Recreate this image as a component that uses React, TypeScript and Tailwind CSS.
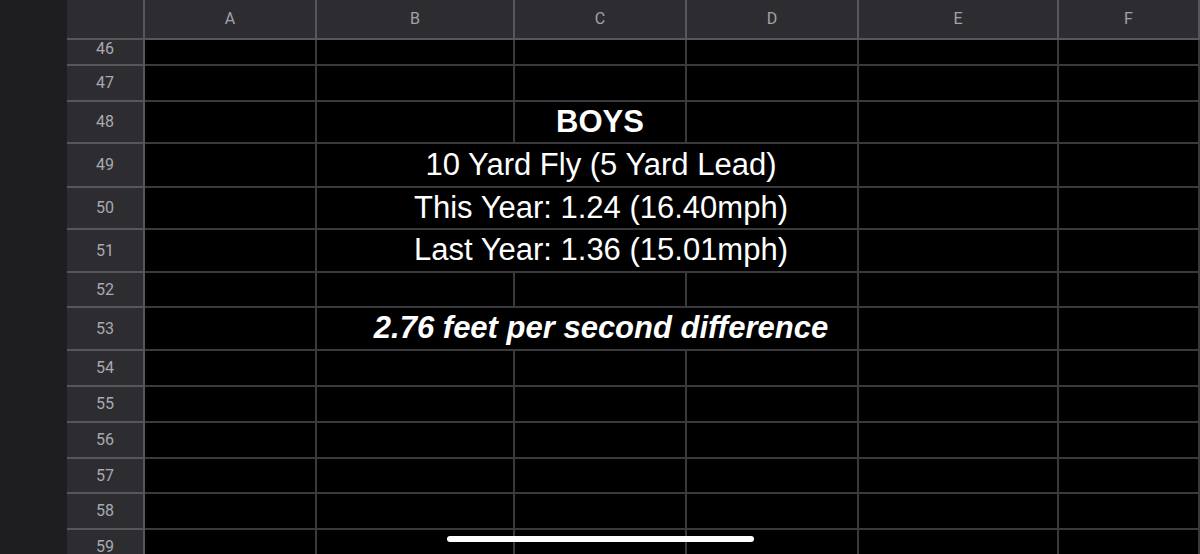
import React from "react";

type Row = {
  n: number;
  h: string;
  text?: string;
  style?: "bold" | "plain" | "boldItalic";
  spill?: boolean;
};

const COLS = ["A", "B", "C", "D", "E", "F"];
const COL_W = ["w-[172px]", "w-[198px]", "w-[172px]", "w-[172px]", "w-[200px]", "flex-1"];

const ROWS: Row[] = [
  { n: 46, h: "h-[26px]" },
  { n: 47, h: "h-[36px]" },
  { n: 48, h: "h-[42px]", text: "BOYS", style: "bold" },
  { n: 49, h: "h-[44px]", text: "10 Yard Fly (5 Yard Lead)", style: "plain", spill: true },
  { n: 50, h: "h-[42px]", text: "This Year: 1.24 (16.40mph)", style: "plain", spill: true },
  { n: 51, h: "h-[43px]", text: "Last Year: 1.36 (15.01mph)", style: "plain", spill: true },
  { n: 52, h: "h-[35px]" },
  { n: 53, h: "h-[43px]", text: "2.76 feet per second difference", style: "boldItalic", spill: true },
  { n: 54, h: "h-[36px]" },
  { n: 55, h: "h-[36px]" },
  { n: 56, h: "h-[36px]" },
  { n: 57, h: "h-[35px]" },
  { n: 58, h: "h-[36px]" },
  { n: 59, h: "h-[36px]" },
];

const textClass = {
  bold: "font-bold text-[31px]",
  plain: "font-normal text-[31px]",
  boldItalic: "font-bold italic text-[31px]",
};

const SheetRow: React.FC<{ row: Row; first?: boolean }> = ({ row, first }) => (
  <div className={`flex ${row.h}`}>
    {/* the top row is scrolled half under the header, so its number sits high */}
    <div
      className={`w-[78px] shrink-0 flex justify-center bg-[#2d2d31] border-r-2 border-b-2 border-[#56565b] text-[16px] text-[#a9a9ae] font-['Roboto',sans-serif] ${
        first ? "items-start leading-none pt-[1px]" : "items-center"
      }`}
    >
      {row.n}
    </div>
    {COLS.map((c, i) => {
      // text in C spills over B and D, so their shared edges are hidden
      const hideRight = row.spill && (c === "B" || c === "C");
      return (
        <div
          key={c}
          className={`${COL_W[i]} shrink-0 flex items-center justify-center border-b-2 border-[#3a3a3e] ${
            hideRight ? "" : "border-r-2"
          }`}
        >
          {c === "C" && row.text && (
            <span
              className={`whitespace-nowrap text-white font-['Liberation_Sans',Arial,sans-serif] ${
                textClass[row.style || "plain"]
              }`}
            >
              {row.text}
            </span>
          )}
        </div>
      );
    })}
  </div>
);

export default function App() {
  return (
    <div className="relative flex w-[1200px] h-[554px] overflow-hidden bg-black">
      <div className="w-[67px] shrink-0 bg-[#1e1e21]" />
      <div className="flex-1 flex flex-col min-w-0">
        {/* column letters */}
        <div className="flex h-[40px] shrink-0 bg-[#2d2d31] border-b-2 border-[#56565b] text-[16px] text-[#a2a2a8] font-['Roboto',sans-serif]">
          <div className="w-[78px] shrink-0 border-r-2 border-[#56565b]" />
          {COLS.map((c, i) => (
            <div
              key={c}
              className={`${COL_W[i]} shrink-0 flex items-center justify-center border-r-2 border-[#56565b]`}
            >
              {c}
            </div>
          ))}
        </div>
        <div className="flex-1 overflow-hidden">
          {ROWS.map((r, i) => (
            <SheetRow key={r.n} row={r} first={i === 0} />
          ))}
        </div>
      </div>
      {/* home indicator */}
      <div className="absolute left-[447px] top-[536px] w-[307px] h-[6px] rounded-full bg-white" />
    </div>
  );
}
